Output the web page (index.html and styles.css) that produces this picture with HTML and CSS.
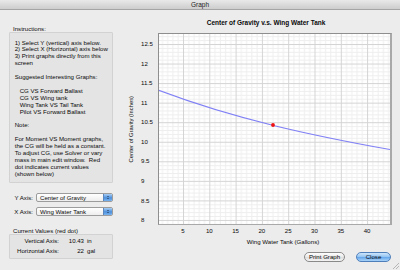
FILE: index.html
```html
<!DOCTYPE html>
<html>
<head>
<meta charset="utf-8">
<link rel="stylesheet" href="styles.css">
</head>
<body>
<div class="window">
  <div class="titlebar">Graph</div>
  <div class="content">
    <div class="left">
      <div class="group-label">Instructions:</div>
      <div class="group-box instructions">
        <p>1) Select Y (vertical) axis below.<br>2) Select X (Horizontal) axis below<br>3) Print graphs directly from this<br>screen</p>
        <p>Suggested Interesting Graphs:</p>
        <p class="indent">CG VS Forward Ballast<br>CG VS Wing tank<br>Wing Tank VS Tail Tank<br>Pilot VS Forward Ballast</p>
        <p>Note:</p>
        <p>For Moment VS Moment graphs,<br>the CG will be held as a constant.<br>To adjust CG, use Solver or vary<br>mass in main edit window.&nbsp; Red<br>dot indicates current values<br>(shown below)</p>
      </div>
      <div class="axis-row first">
        <span class="axis-label">Y Axis:</span>
        <div class="popup"><span class="popup-text">Center of Gravity</span><span class="stepper"><i class="up"></i><i class="down"></i></span></div>
      </div>
      <div class="axis-row">
        <span class="axis-label">X Axis:</span>
        <div class="popup"><span class="popup-text">Wing Water Tank</span><span class="stepper"><i class="up"></i><i class="down"></i></span></div>
      </div>
      <div class="group-label current">Current Values (red dot)</div>
      <div class="group-box values">
        <span class="v-label">Vertical Axis:</span><span class="v-num">10.43</span><span class="v-unit">in</span>
        <span class="v-label">Horizontal Axis:</span><span class="v-num">22</span><span class="v-unit">gal</span>
      </div>
    </div>
    <div class="right">
      <div class="chart-title">Center of Gravity v.s. Wing Water Tank</div>
      <div class="y-title">Center of Gravity (Inches)</div>
      <div class="y-ticks">
        <span>12.5</span><span>12</span><span>11.5</span><span>11</span><span>10.5</span><span>10</span><span>9.5</span><span>9</span><span>8.5</span><span>8</span>
      </div>
      <div class="plot">
        <svg width="231" height="190" viewBox="0 0 231 190">
          <defs>
            <pattern id="grid" patternUnits="userSpaceOnUse" x="24" y="10" width="26.3" height="19.55">
              <rect x="5.26" y="0" width="1" height="19.55" fill="#eeeeee"/>
              <rect x="10.52" y="0" width="1" height="19.55" fill="#eeeeee"/>
              <rect x="15.78" y="0" width="1" height="19.55" fill="#eeeeee"/>
              <rect x="21.04" y="0" width="1" height="19.55" fill="#eeeeee"/>
              <rect x="0" y="3.91" width="26.3" height="1" fill="#eeeeee"/>
              <rect x="0" y="7.82" width="26.3" height="1" fill="#eeeeee"/>
              <rect x="0" y="11.73" width="26.3" height="1" fill="#eeeeee"/>
              <rect x="0" y="15.64" width="26.3" height="1" fill="#eeeeee"/>
              <rect x="0" y="0" width="1" height="19.55" fill="#d4d4d4"/>
              <rect x="0" y="0" width="26.3" height="1" fill="#d4d4d4"/>
            </pattern>
          </defs>
          <rect x="0" y="0" width="231" height="190" fill="url(#grid)"/>
          <path d="M-1,56 C76.7,85.5 154.3,101.7 232,115.7" fill="none" stroke="#7f7ff6" stroke-width="1.1"/>
          <circle cx="114" cy="91" r="1.9" fill="#ee1111"/>
        </svg>
      </div>
      <div class="x-ticks">
        <span>5</span><span>10</span><span>15</span><span>20</span><span>25</span><span>30</span><span>35</span><span>40</span>
      </div>
      <div class="x-title">Wing Water Tank (Gallons)</div>
      <div class="buttons">
        <div class="btn">Print Graph</div>
        <div class="btn default">Close</div>
      </div>
    </div>
  </div>
  <div class="grip"></div>
</div>
</body>
</html>
```

FILE: styles.css
```css
html, body {
  margin: 0;
  padding: 0;
}
body {
  width: 400px;
  height: 270px;
  overflow: hidden;
  background: #ececec;
  font-family: "Liberation Sans", Arial, sans-serif;
  font-size: 6.1px;
  color: #0a0a0a;
}
.window {
  position: relative;
  width: 400px;
  height: 270px;
  display: flex;
  flex-direction: column;
}
.titlebar {
  height: 9px;
  line-height: 9px;
  text-align: center;
  font-size: 6.5px;
  color: #222;
  background: linear-gradient(#e9e9e9, #cdcdcd);
  border-bottom: 1px solid #a5a5a5;
}
.content {
  flex: 1;
  display: flex;
}
.left {
  width: 104px;
  margin-left: 9px;
  display: flex;
  flex-direction: column;
}
.group-label {
  padding-top: 15px;
  padding-left: 4px;
  line-height: 7px;
  height: 7px;
}
.group-box {
  background: #e4e4e4;
  border: 1px solid #d2d2d2;
  border-radius: 1px;
}
.instructions {
  padding: 6.5px 0 0 4.7px;
  box-sizing: content-box;
  height: 142.5px;
  line-height: 6.9px;
}
.instructions p {
  margin: 0 0 6.9px 0;
}
.instructions p.indent {
  padding-left: 5px;
}
.axis-row {
  display: flex;
  align-items: center;
  gap: 3px;
  margin-top: 5px;
  height: 9px;
}
.axis-row.first {
  margin-top: 10px;
}
.axis-label {
  width: 24px;
  text-align: right;
}
.popup {
  flex: 1;
  height: 7px;
  display: flex;
  align-items: center;
  border: 1px solid #9c9c9c;
  border-radius: 2px;
  background: linear-gradient(#ffffff, #ededed);
  overflow: hidden;
}
.popup-text {
  flex: 1;
  padding-left: 3px;
  line-height: 7px;
}
.stepper {
  width: 8px;
  height: 7px;
  background: linear-gradient(#a9cff5, #4d8fdc 55%, #78b3ef);
  border-left: 1px solid #5b86bd;
  display: flex;
  flex-direction: column;
  align-items: center;
  justify-content: center;
  gap: 1px;
}
.stepper i {
  width: 0;
  height: 0;
  border-left: 1.5px solid transparent;
  border-right: 1.5px solid transparent;
}
.stepper .up {
  border-bottom: 1.5px solid #1b2b45;
}
.stepper .down {
  border-top: 1.5px solid #1b2b45;
}
.group-label.current {
  padding-top: 11px;
}
.values {
  padding-top: 1px;
  box-sizing: content-box;
  height: 22px;
  display: grid;
  grid-template-columns: 49px 25px auto;
  grid-auto-rows: 9.6px;
  align-items: center;
  line-height: 9.6px;
}
.v-label {
  text-align: right;
}
.v-num {
  text-align: right;
}
.v-unit {
  padding-left: 3px;
}
.right {
  display: grid;
  grid-template-columns: 11px 14px 20px 234px;
  grid-template-rows: 23px 192px 12px 9px auto;
}
.chart-title {
  grid-column: 4;
  grid-row: 1;
  padding-top: 8.7px;
  padding-left: 48.7px;
  font-weight: bold;
  font-size: 6.5px;
  line-height: 8px;
  white-space: nowrap;
}
.y-title {
  grid-column: 2;
  grid-row: 2;
  writing-mode: vertical-rl;
  transform: rotate(180deg);
  align-self: center;
  justify-self: center;
  font-size: 5.8px;
  white-space: nowrap;
}
.y-ticks {
  grid-column: 3;
  grid-row: 2;
  display: flex;
  flex-direction: column;
  padding-top: 1.2px;
  padding-left: 3px;
  height: 192px;
  box-sizing: border-box;
}
.y-ticks span {
  display: block;
  height: 19.55px;
  line-height: 19.55px;
  flex: none;
}
.plot {
  grid-column: 4;
  grid-row: 2;
  width: 231px;
  height: 190px;
  background: #ffffff;
  border-top: 1px solid #8e8e8e;
  border-left: 1px solid #8e8e8e;
  border-right: 2px solid #a9a9a9;
  border-bottom: 1px solid #a9a9a9;
  overflow: hidden;
}
.plot svg {
  display: block;
}
.x-ticks {
  grid-column: 4;
  grid-row: 3;
  display: flex;
  padding-left: 11.85px;
  padding-top: 2px;
  line-height: 8px;
}
.x-ticks span {
  width: 26.3px;
  flex: none;
  text-align: center;
}
.x-title {
  grid-column: 4;
  grid-row: 4;
  padding-left: 16px;
  text-align: center;
  line-height: 8px;
  margin-top: 0.7px;
}
.buttons {
  grid-column: 4;
  grid-row: 5;
  display: flex;
  justify-content: flex-end;
  gap: 11px;
  padding-top: 6px;
  padding-right: 1px;
}
.btn {
  height: 8px;
  line-height: 8px;
  padding: 0;
  text-align: center;
  border: 1px solid #8a8a8a;
  border-radius: 5px;
  background: linear-gradient(#ffffff, #e9e9e9 50%, #dcdcdc 51%, #f4f4f4);
  width: 39px;
}
.btn.default {
  width: 33px;
  border-color: #4f7fbb;
  background: linear-gradient(#cfe6fb, #8fc2f2 50%, #62a4ea 51%, #a9d3f8);
}
.grip {
  position: absolute;
  right: 1px;
  bottom: 1px;
  width: 6px;
  height: 6px;
  background: linear-gradient(135deg, transparent 45%, #b5b5b5 45%, #b5b5b5 55%, transparent 55%, transparent 70%, #b5b5b5 70%, #b5b5b5 80%, transparent 80%);
}
```
